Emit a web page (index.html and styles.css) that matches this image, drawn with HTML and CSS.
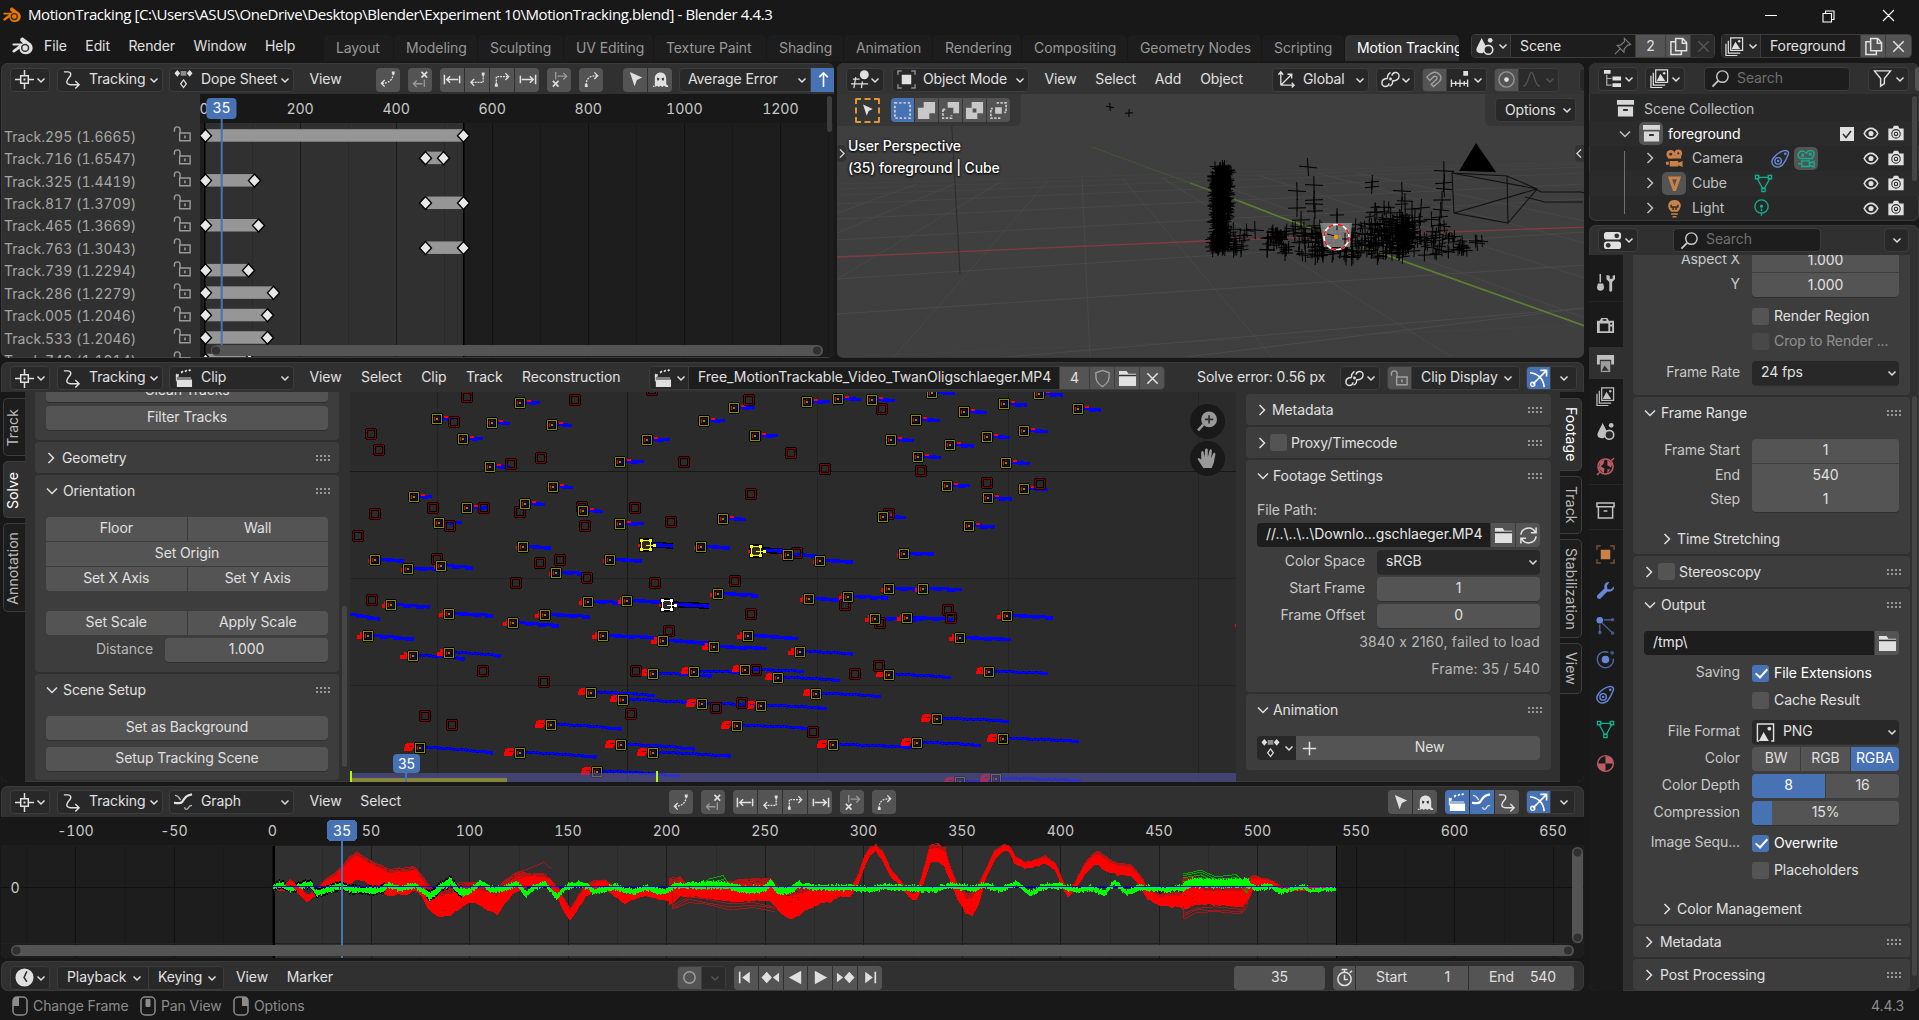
FILE: index.html
```html
<!DOCTYPE html>
<html lang="en">
<head>
<meta charset="utf-8">
<title>MotionTracking - Blender 4.4.3</title>
<link rel="stylesheet" href="styles.css">
</head>
<body>
<svg class="defs" aria-hidden="true">
<symbol id="chev" viewBox="0 0 10 10"><path d="M1.500 3.500 5 7l3.500-3.500" stroke-width="1.500"/></symbol>
<symbol id="right" viewBox="0 0 12 16"><path d="M3.500 3 8.500 8l-5 5" stroke-width="1.500"/></symbol>
<symbol id="down" viewBox="0 0 16 12"><path d="M3 3.500 8 8.500l5-5" stroke-width="1.500"/></symbol>
<symbol id="blender" viewBox="0 0 22 18"><path class="f" d="M9 2.300 11 1l8 6.200c2.500 2.500 2.200 7-.8 9-3.200 2-8 1.400-9.600-2l-.5-2.200-4.600 3.500C2 16.200.5 14.500 2 13.300L7.800 9H2.500C1 9 1 7 2.500 7h9L8.800 4.400z"/><circle class="hole" cx="13.500" cy="11.300" r="4"/><circle class="dot" cx="13.500" cy="11.300" r="2.500"/></symbol>
<symbol id="track" viewBox="0 0 20 20"><path d="M10 0v6M10 14v6M0 10h6M14 10h6M6 6h8v8H6z" stroke-width="1.600"/><path class="f" d="M9 9h2v2H9z"/></symbol>
<symbol id="curvearrow" viewBox="0 0 20 20"><path d="M2 2h4c4 0 4 3.500 1.500 6S3 15 9 15.500h9M14 11.500l4 4-4 4" stroke-width="1.500"/></symbol>
<symbol id="dope" viewBox="0 0 20 20"><path class="f" d="M3.500 0 6.500 3.500 3.500 7 .5 3.500zM16.500 0l3 3.500-3 3.500-3-3.500z"/><path class="f dim" d="M7 1h6v5H7z"/><path d="M10 10.500l3 4-3 4-3-4z" stroke-width="1.300"/></symbol>
<symbol id="clip" viewBox="0 0 20 20"><path class="f" d="M3 11h16v8H3zM2 6l3-1v3L2 9zM7 3l2-1.500 1 1.500-2 2zM11 2l2-1.500 1 1.500-2 1.500zM15 1l2-1 1 1.500-2 1z"/><path d="M2.500 5v8M3 9.500h15" stroke-width="1"/></symbol>
<symbol id="graph" viewBox="0 0 20 20"><path d="M0 10.500c4 0 7 1 8.500-1 3-4.500 4-7 10.500-8" stroke-width="2.400"/><path d="M1 2.500c4 0 4.500 3 6 5M11 15c1 3 3 3 4.500 0 1-2 2-2 3.500-2" opacity=".75" stroke-width="1.500"/></symbol>
<symbol id="a1" viewBox="0 0 20 20"><path stroke-dasharray="2 1.200" d="M3 14c6 0 11-2 12-10"/><path d="M6 10.500 2.500 14 6 17.500"/><path class="f" d="M13.500 1.500h3v3h-3z"/></symbol>
<symbol id="a2" viewBox="0 0 20 20"><path d="M11 2l6 6M17 2l-6 6" stroke-width="1.700"/><path d="M3 14.500h9M6 11l-3.500 3.500L6 18M14 10v8" opacity=".5"/></symbol>
<symbol id="a3" viewBox="0 0 20 20"><path stroke-width="1.600" d="M1.500 5v10M17.500 6v8M4 10h12M7.500 6.500 4 10l3.500 3.500"/></symbol>
<symbol id="a4" viewBox="0 0 20 20"><path stroke-dasharray="2 1" d="M4 13h12V5"/><path d="M6.500 9.500 3 13l3.500 3.500"/><path class="f" d="M14.500 2.500h3v3h-3z"/></symbol>
<symbol id="a5" viewBox="0 0 20 20"><path stroke-dasharray="2 1" d="M3.500 15V7H16"/><path d="M13 3.500 16.500 7 13 10.500"/><path class="f" d="M2 14.500h3v3H2z"/></symbol>
<symbol id="a6" viewBox="0 0 20 20"><path stroke-width="1.600" d="M18.500 5v10M2.500 6v8M4 10h12M12.500 6.500 16 10l-3.500 3.500"/></symbol>
<symbol id="a7" viewBox="0 0 20 20"><path d="M3 11.500l6 6M9 11.500l-6 6" stroke-width="1.700"/><path d="M8 6.500h9M14 3l3.500 3.500L14 10M6 2v8" opacity=".5"/></symbol>
<symbol id="a8" viewBox="0 0 20 20"><path stroke-dasharray="2 1.200" d="M4.500 16C4 9 8 6 16 6"/><path d="M13 2.500 16.500 6 13 9.500"/><path class="f" d="M3 15h3v3H3z"/></symbol>
<symbol id="cursor" viewBox="0 0 20 20"><path class="f" d="M4 2l13 6-5.500 2.500L9 17z"/></symbol>
<symbol id="ghost" viewBox="0 0 20 20"><path class="f" d="M4 18V9C4 .5 16 .5 16 9v9l-2.500-1.500L12 18l-2-1.500L8 18l-1.500-1.500L4 18H2v-2zM16 15l2 1.500V18h-2z"/><path class="hole" d="M6.500 8l2.500 1-1 2H6.500zM13.500 8 11 9l1 2h1.500z"/></symbol>
<symbol id="up" viewBox="0 0 20 20"><path stroke-width="1.700" d="M10 18V3M5.500 7.500 10 3l4.500 4.500"/></symbol>
<symbol id="unlock" viewBox="0 0 20 20"><path d="M7 8.500h11v8H7zM1.500 7V5c0-4 6-4 6 0v3" stroke-width="1.500"/><path class="f" d="M11.700 11h1.800v3h-1.800z"/></symbol>
<symbol id="view3d" viewBox="0 0 20 20"><circle class="f" cx="14" cy="5" r="4.700"/><path d="M0 14.500h18M2 9.500h7M5 7.500 3 19M12 12l-1 7" stroke-width="1.300"/></symbol>
<symbol id="objmode" viewBox="0 0 20 20"><path class="f" d="M5 5h10v10H5z"/><path d="M1 5V1h4M15 1h4v4M19 15v4h-4M5 19H1v-4" opacity=".55" stroke-width="1.500"/></symbol>
<symbol id="axes" viewBox="0 0 20 20"><path d="M4 16V2M1.500 5 4 2l2.500 3M4 16h14M15.500 13.500 18 16l-2.500 2.500M4 16 15 5M11 4.500h4.500V9" stroke-width="1.400"/></symbol>
<symbol id="link" viewBox="0 0 20 20"><path d="M8.500 14c-1 5-8 4-7.500-.5C1 10 4 9 7 9M11.500 6c1-5 8-4 7.500.5C19 10 15 12 12 11M7 9c-1-3 1-5 3-6.500M12 11c1 3-1 5-3 6" stroke-width="1.500"/><circle class="f" cx="10" cy="9.500" r="1.500"/></symbol>
<symbol id="magnet" viewBox="0 0 20 20"><path d="M2 7.500C6 3 9 1 13 3c6 3.500 4 8.500 0 11l-4 3.500-2.500-2.500L12 10c2-2-1-5-3.500-2.500L5 11z" stroke-width="1.500"/></symbol>
<symbol id="snap" viewBox="0 0 20 20"><path d="M1 14h18M1.500 10v8M6 11.500v5M10.500 10v8M15 11.500v5M18.500 10v8" stroke-width="1.400"/><path class="f" d="M14 1h5v5h-5z"/></symbol>
<symbol id="prop" viewBox="0 0 20 20"><circle cx="10" cy="10" r="8" opacity=".45" stroke-width="1.500"/><circle class="f" cx="10" cy="10" r="2.500"/></symbol>
<symbol id="fall" viewBox="0 0 20 20"><path d="M1 17C7 17 7 2.500 10 2.500S13 17 19 17" stroke-width="1.400"/></symbol>
<symbol id="tree" viewBox="0 0 20 20"><path class="f" d="M1 1h7v4H1zM10 8h9v4h-9zM10 15h9v4h-9z"/><path d="M4 6v11h5M4 10h5" stroke-width="1.300" opacity=".7"/></symbol>
<symbol id="imgs" viewBox="0 0 20 20"><path d="M6 1h12.500v13H6zM3.500 4v13H16M1 7v12.500h12" stroke-width="1.300"/><path class="f" d="M7 12.500 11 5l5 7.500z"/><circle class="f" cx="15" cy="4.500" r="1.300"/></symbol>
<symbol id="search" viewBox="0 0 20 20"><circle cx="12" cy="8" r="6" stroke-width="1.500"/><path d="M7.500 12.500 1.500 18.500" stroke-width="2"/></symbol>
<symbol id="filter" viewBox="0 0 20 20"><path d="M1.500 2h17l-6.500 8v5.500L8 18v-8z" stroke-width="1.500"/></symbol>
<symbol id="props" viewBox="0 0 20 20"><rect class="f" x="1" y="1" width="18" height="8" rx="3"/><rect class="f" x="1" y="11" width="18" height="8" rx="3"/><circle class="hole" cx="14.500" cy="5" r="2.500"/><circle class="hole" cx="5.500" cy="15" r="2.500"/></symbol>
<symbol id="coll" viewBox="0 0 20 20"><path class="f" d="M1 1h18v5H1zM2 8h16v10.500H2z"/><path class="hole" d="M7.500 10.500h5v2h-5z"/></symbol>
<symbol id="collo" viewBox="0 0 20 20"><path d="M1 2h18v4H1zM2.500 6v12h15V6M8 10.500h4" stroke-width="1.600"/></symbol>
<symbol id="eye" viewBox="0 0 20 20"><path d="M2 10c4-8 12-8 16 0-4 8-12 8-16 0z" stroke-width="1.900"/><circle class="f" cx="10" cy="10" r="3"/></symbol>
<symbol id="cam" viewBox="0 0 20 20"><path class="f" d="M1 4h5l1.500-3h5L14 4h5v14H1z"/><circle class="ring" cx="10" cy="10.500" r="5"/><circle class="ring" cx="10" cy="10.500" r="2"/></symbol>
<symbol id="camobj" viewBox="0 0 20 20"><circle class="f" cx="6" cy="5.500" r="4.500"/><circle class="f" cx="14" cy="4.500" r="4"/><path class="f" d="M3 7h14v3H3zM5 12.500h9v6H5zM14 14.500l4.500-2v6.500L14 17zM1 13.500h3v3H1z"/><circle class="hole" cx="6" cy="5.500" r="1.500"/><circle class="hole" cx="14" cy="4.500" r="1.200"/></symbol>
<symbol id="camdata" viewBox="0 0 20 20"><path d="M3 10C-1 6 3 1 7 2.500c2 .8 2.500 2 3 2 1.500-4 7.500-3.500 8 0 .3 2.500-1 3.500-2 5.500zM5 12.500h8v6H5zM13 15l5-2v6l-5-2zM1 15.500h3" stroke-width="1.500"/><circle cx="6" cy="6.500" r="1"/><circle cx="14" cy="5.500" r="1"/></symbol>
<symbol id="cone" viewBox="0 0 20 20"><path d="M3 2.500h14L11.500 18h-3zM7.500 5.500h5L10 13z" class="f" fill-rule="evenodd"/></symbol>
<symbol id="mesh" viewBox="0 0 20 20"><path d="M4 3.500h12M3.500 5l5.500 10M16.500 5 11 15M1.500 1.500H5V5H1.500zM15 1.500h3.500V5H15zM8.200 15h3.500v3.500H8.200z" stroke-width="1.400"/></symbol>
<symbol id="bulb" viewBox="0 0 20 20"><path class="f" d="M6.500 13.500C1 8 3 1 10 1s9 7 3.500 12.500zM6.500 15h7v1.700h-7zM8 18h4v1.500H8z"/><path class="holeline" d="M6.500 6v2.500h2v3M13.500 6v2.500h-2v3M8.500 8.500h3"/></symbol>
<symbol id="lightdata" viewBox="0 0 20 20"><circle cx="10" cy="8" r="7" stroke-width="1.400"/><path d="M10 10v9" stroke-dasharray="3 1.500" stroke-width="1.400"/><circle class="f" cx="10" cy="7.500" r="1.600"/></symbol>
<symbol id="constr" viewBox="0 0 20 20"><path d="M2.500 9.500C5 6 10 2.500 15 1.500c3 0 4 2 3 4.500-1.500 4-3.500 8-6 11C5 22-2 16 2.500 9.500z" stroke-width="1.500"/><circle cx="7.500" cy="12.500" r="3.400" stroke-width="1.500"/><circle class="f" cx="7.500" cy="12.500" r="1.300"/><circle cx="15" cy="5" r=".7"/></symbol>
<symbol id="pin" viewBox="0 0 20 20"><path d="M12 1.500 18.500 8l-3 .5-3.500 4-.5 3.500-7-7 3.500-.5 4-3.500zM7.500 12.500 2 18" stroke-width="1.300"/></symbol>
<symbol id="copy" viewBox="0 0 20 20"><path d="M7 1.500h7.500L18.500 6v8.500H7zM14 1.500V6.500h4.500M7 5H2v13.500h11V15" stroke-width="1.600"/></symbol>
<symbol id="x" viewBox="0 0 20 20"><path d="M4.500 4.500l11 11M15.500 4.500l-11 11" stroke-width="1.600"/></symbol>
<symbol id="scene" viewBox="0 0 20 20"><path class="f" d="M7 1l4.500 9-1.500 5c-1 3-8 3-8.500-1C1 11.500 5 6 7 1z"/><circle class="f" cx="16" cy="3.500" r="2.500"/><circle class="holefill" cx="14" cy="13.500" r="4.700" stroke-width="1.700"/></symbol>
<symbol id="shield" viewBox="0 0 20 20"><path d="M10 1.500l7 2.500c.5 7-1 11-7 14.500C4 15 2.500 11 3 4z" stroke-width="1.400"/></symbol>
<symbol id="folder" viewBox="0 0 20 20"><path class="f" d="M1 2h8l2 3h8v13H1z"/><path class="holeline" d="M1 6.800h18"/></symbol>
<symbol id="reload" viewBox="0 0 20 20"><path d="M2 9C3 1 14 0 17 6.500M18 1.500v5.500h-5.500M18 11c-1 8-12 9-15 2.500M2 18.500V13h5.500" stroke-width="1.600"/></symbol>
<symbol id="gizmo" viewBox="0 0 20 20"><path d="M1 4c8 1 14 6 15 15M4 16 18 2M12 1.500h6.500V8" stroke-width="1.700"/><circle cx="4" cy="16" r="2.200"/></symbol>
<symbol id="plus" viewBox="0 0 20 20"><path d="M10 3v14M3 10h14" stroke-width="1.600"/></symbol>
<symbol id="png" viewBox="0 0 20 20"><path d="M4 1h14.500v18H16M4 1H1.500v18H3" stroke-width="1.500"/><path class="f" d="M3 19 8 9.500l5.500 9.500z"/><circle class="f" cx="14" cy="6" r="2"/></symbol>
<symbol id="clock" viewBox="0 0 20 20"><circle class="f" cx="10" cy="10" r="9.500"/><path class="holeline" d="M12.500 3.500 9.500 10l3 4.500"/></symbol>
<symbol id="stop" viewBox="0 0 20 20"><circle cx="10" cy="11.500" r="7" stroke-width="1.600"/><path d="M10 7v5h3.500M7 1.500h6M10 1.500v3M15.500 5 18 3" stroke-width="1.600"/></symbol>
<symbol id="rec" viewBox="0 0 20 20"><circle cx="10" cy="10" r="6" stroke-width="1.500"/></symbol>
<symbol id="p1" viewBox="0 0 20 20"><path class="f" d="M3 4h1.800v12H3zM14.500 4v12L6.500 10z"/></symbol>
<symbol id="p2" viewBox="0 0 20 20"><path class="f" d="M6 4l5.500 6L6 16 .5 10zM19 5v10l-6.500-5z"/></symbol>
<symbol id="p3" viewBox="0 0 20 20"><path class="f" d="M16 3v14L3 10z"/></symbol>
<symbol id="p4" viewBox="0 0 20 20"><path class="f" d="M4 3v14l13-7z"/></symbol>
<symbol id="p5" viewBox="0 0 20 20"><path class="f" d="M14 4l5.500 6-5.500 6-5.500-6zM1 5v10l6.500-5z"/></symbol>
<symbol id="p6" viewBox="0 0 20 20"><path class="f" d="M15.200 4H17v12h-1.800zM5.500 4v12l8-6z"/></symbol>
<symbol id="tool" viewBox="0 0 20 20"><path d="M4.500 1v9" stroke-width="1.600"/><path class="f" d="M2 11h5.500l1 4c0 5-7.500 5-7.500 0zM11 2v4.500l3 3v9c0 1.500 3 1.500 3 0v-9l3-3V2l-2.500 1v3h-3V3z"/></symbol>
<symbol id="render" viewBox="0 0 20 20"><path class="f" fill-rule="evenodd" d="M1 5h3l1.500-3H12l1.500 3H19v13H1zM4 8v8h9V8zM15 7v2h2V7zM15 11v5h2v-5zM7 3.500V5h4V3.500z"/></symbol>
<symbol id="output" viewBox="0 0 20 20"><path class="f" d="M1 1h18v10h-3V6H4v5H1z"/><path class="f" d="M5 7.500h10V19H5z" opacity=".75"/><path class="hole" d="M6 17.500 9 12l4.500 5.500z"/></symbol>
<symbol id="world" viewBox="0 0 20 20"><circle cx="10" cy="10" r="8" stroke-width="1.600"/><path class="f" d="M4 5l5-2-1 4-3 3 4 2-1 5-5-5zM12 3l5 4-1 4-4-2zM12 13l3 0-3 4z"/><path d="M1 19l3-3M16 4l3-3" stroke-width="1.500"/></symbol>
<symbol id="wrench" viewBox="0 0 20 20"><path class="f" d="M14 1c-4-.5-6 3-5 6.500L1.500 15c-1.500 2 1 5 3.200 3.500L12 11c4 1 7.500-1.500 7-5.500L15.500 9 12 8.500 11.500 5z"/></symbol>
<symbol id="part" viewBox="0 0 20 20"><circle class="f" cx="4" cy="4.500" r="3.500"/><path d="M8.500 4h8M4 9v8M6.500 7.500 16.500 17" stroke-width="1.300" opacity=".7"/><circle class="f dim" cx="17.500" cy="4" r="1.900"/><circle class="f dim" cx="4" cy="17.500" r="1.900"/><circle class="f dim" cx="17.500" cy="18" r="1.900"/></symbol>
<symbol id="phys" viewBox="0 0 20 20"><path d="M13 2.500C6 0 1 5 1.500 10.500 2 18 11 21 16 16c2-2 2.500-5 2-7" stroke-width="1.400" opacity=".75"/><circle class="f" cx="10" cy="10" r="4"/><circle class="f dim" cx="17" cy="3" r="2"/></symbol>
<symbol id="mat" viewBox="0 0 20 20"><circle cx="10" cy="10" r="8.300" stroke-width="1.500"/><path class="f" d="M10 2v8h8C18 5 15 2 10 2zM10 18v-8H2c0 5 3 8 8 8z"/></symbol>
<symbol id="mouseL" viewBox="0 0 16 20"><rect x="1" y="1" width="14" height="18" rx="4" stroke-width="1.500"/><path class="f" d="M1 4c0-2 1-3 3-3h3v9H1z"/></symbol>
<symbol id="mouseM" viewBox="0 0 16 20"><rect x="1" y="1" width="14" height="18" rx="4" stroke-width="1.500"/><rect class="f" x="5.500" y="3" width="5" height="8" rx="1"/></symbol>
<symbol id="mouseR" viewBox="0 0 16 20"><rect x="1" y="1" width="14" height="18" rx="4" stroke-width="1.500"/><path class="f" d="M9 1h3c2 0 3 1 3 3v6H9z"/></symbol>
<symbol id="s1" viewBox="0 0 20 20"><path d="M2 2h16v16H2z" stroke-dasharray="2.500 2" stroke-width="2"/></symbol>
<symbol id="s2" viewBox="0 0 20 20"><path class="f" d="M7 1h12v12h-6v6H1V7h6z"/></symbol>
<symbol id="s3" viewBox="0 0 20 20"><path class="f" d="M7 1h12v12h-6V7H7z"/><path d="M2 9v9h9v-3M2 9h4" stroke-dasharray="2.500 1.500" stroke-width="2"/></symbol>
<symbol id="s4" viewBox="0 0 20 20"><path class="f" fill-rule="evenodd" d="M7 1h12v12h-6v6H1V7h6zM8 8v4h4V8z"/></symbol>
<symbol id="s5" viewBox="0 0 20 20"><path class="f" d="M6.500 6.500h7v7h-7z"/><path d="M8 2h10v10h-2M12 18H2V8h2" stroke-dasharray="2.500 1.500" stroke-width="1.800"/></symbol>
<symbol id="hand" viewBox="0 0 20 20"><path class="f" d="M6 19C4 16 2 13 .5 10.500c.8-1.500 2-1 3.500 1L4 4c.5-1.500 2-1.500 2.300 0L7 9l.7-7.500C8 0 10 0 10.300 1.500V9L12 2c.8-1.200 2-.8 2.200.5L13.500 10l2-5c1-1 2.200-.5 2 1L16 14l-2 5z"/></symbol>
<symbol id="zoom" viewBox="0 0 20 20"><circle class="f" cx="11.500" cy="8" r="7.500"/><path d="M6 13 1 18.500" stroke-width="2.500"/><path class="holeline" d="M11.500 4v8M7.500 8h8"/></symbol>
</svg>

<div class="window">
<header class="titlebar">
  <svg class="i app"><use href="#blender"/></svg>
  <span class="title">MotionTracking [C:\Users\ASUS\OneDrive\Desktop\Blender\Experiment 10\MotionTracking.blend] - Blender 4.4.3</span>
  <svg class="winbtns" viewBox="0 0 148 20"><path d="M8 10.500h12M66 8.500h8.500v8.500H66zM68.500 8.500V6h8.500v8.500h-2M126 5l11 11M137 5l-11 11"/></svg>
</header>

<nav class="menubar">
  <svg class="i logo"><use href="#blender"/></svg>
  <div class="mainmenu"><span>File</span><span>Edit</span><span>Render</span><span>Window</span><span>Help</span></div>
  <div class="wtabs"><span class="t70">Layout</span><span class="t84">Modeling</span><span class="t86">Sculpting</span><span class="t90">UV Editing</span><span class="t113">Texture Paint</span><span class="t77">Shading</span><span class="t89">Animation</span><span class="t89">Rendering</span><span class="t105">Compositing</span><span class="t134">Geometry Nodes</span><span class="t83">Scripting</span><span class="on">Motion Tracking</span></div>
  <div class="grp datasel">
    <div class="cell c39"><svg class="i"><use href="#scene"/></svg><svg class="c"><use href="#chev"/></svg></div>
    <div class="cell fld c125"><span>Scene</span><svg class="i pin"><use href="#pin"/></svg></div>
    <div class="cell lit c30">2</div><div class="cell lit c25"><svg class="i"><use href="#copy"/></svg></div><div class="cell off c25"><svg class="i"><use href="#x"/></svg></div>
  </div>
  <div class="grp layersel">
    <div class="cell c39"><svg class="i"><use href="#imgs"/></svg><svg class="c"><use href="#chev"/></svg></div>
    <div class="cell fld c100"><span>Foreground</span></div>
    <div class="cell lit c25"><svg class="i"><use href="#copy"/></svg></div><div class="cell lit c25"><svg class="i"><use href="#x"/></svg></div>
  </div>
</nav>

<main class="work">
<div class="leftcol">
 <div class="toprow">
  <section class="area dopearea">
   <div class="hdr">
    <div class="dd ed"><svg class="i"><use href="#track"/></svg><svg class="c"><use href="#chev"/></svg></div>
    <div class="dd mode"><svg class="i"><use href="#curvearrow"/></svg><span>Tracking</span><svg class="c"><use href="#chev"/></svg></div>
    <div class="dd kind"><svg class="i"><use href="#dope"/></svg><span>Dope Sheet</span><svg class="c"><use href="#chev"/></svg></div>
    <div class="menus dopemenus"><span>View</span></div>
    <div class="tools"><div class="b"><svg class="i"><use href="#a1"/></svg></div><div class="b"><svg class="i"><use href="#a2"/></svg></div><div class="bg"><div class="b"><svg class="i"><use href="#a3"/></svg></div><div class="b"><svg class="i"><use href="#a4"/></svg></div><div class="b"><svg class="i"><use href="#a5"/></svg></div><div class="b"><svg class="i"><use href="#a6"/></svg></div></div><div class="b"><svg class="i"><use href="#a7"/></svg></div><div class="b"><svg class="i"><use href="#a8"/></svg></div></div>
    <div class="bg selghost"><div class="b"><svg class="i"><use href="#cursor"/></svg></div><div class="b"><svg class="i"><use href="#ghost"/></svg></div></div>
    <div class="dd avg"><span>Average Error</span><svg class="c"><use href="#chev"/></svg></div>
    <div class="b blue upbtn"><svg class="i"><use href="#up"/></svg></div>
   </div>
   <div class="dope">
    <ul class="names">
     <li>Track.295 (1.6665)<svg class="i"><use href="#unlock"/></svg></li><li>Track.716 (1.6547)<svg class="i"><use href="#unlock"/></svg></li><li>Track.325 (1.4419)<svg class="i"><use href="#unlock"/></svg></li><li>Track.817 (1.3709)<svg class="i"><use href="#unlock"/></svg></li><li>Track.465 (1.3669)<svg class="i"><use href="#unlock"/></svg></li><li>Track.763 (1.3043)<svg class="i"><use href="#unlock"/></svg></li><li>Track.739 (1.2294)<svg class="i"><use href="#unlock"/></svg></li><li>Track.286 (1.2279)<svg class="i"><use href="#unlock"/></svg></li><li>Track.005 (1.2046)<svg class="i"><use href="#unlock"/></svg></li><li>Track.533 (1.2046)<svg class="i"><use href="#unlock"/></svg></li><li>Track.749 (1.1914)<svg class="i"><use href="#unlock"/></svg></li>
    </ul>
    <svg class="dopechart" id="dopechart" viewBox="0 0 634 263" width="634" height="263"></svg>
   </div>
  </section>

  <section class="area viewarea">
   <svg class="scene3d" id="scene3d" viewBox="0 0 748 294" width="748" height="294"></svg>
   <div class="vover">
    <div class="hdr vh">
     <div class="dd ved"><svg class="i"><use href="#view3d"/></svg><svg class="c"><use href="#chev"/></svg></div>
     <div class="dd objm"><svg class="i"><use href="#objmode"/></svg><span>Object Mode</span><svg class="c"><use href="#chev"/></svg></div>
     <div class="menus viewmenus"><span>View</span><span>Select</span><span>Add</span><span>Object</span></div>
     <div class="dd glob"><svg class="i"><use href="#axes"/></svg><span>Global</span><svg class="c"><use href="#chev"/></svg></div>
     <div class="dd lnk"><svg class="i"><use href="#link"/></svg><svg class="c"><use href="#chev"/></svg></div>
     <div class="grp g7"><div class="cell lit c24 dimi"><svg class="i"><use href="#magnet"/></svg></div><div class="cell c39"><svg class="i"><use href="#snap"/></svg><svg class="c"><use href="#chev"/></svg></div></div>
     <div class="grp g7"><div class="cell lit c24"><svg class="i"><use href="#prop"/></svg></div><div class="cell c39 off"><svg class="i"><use href="#fall"/></svg><svg class="c"><use href="#chev"/></svg></div></div>
     <div class="dd cut"><svg class="i"><use href="#cursor"/></svg></div>
    </div>
    <div class="vtool">
     <div class="toolbox"><div class="seltool"><svg class="i"><use href="#cursor"/></svg></div><div class="bg"><div class="b blue"><svg class="i"><use href="#s1"/></svg></div><div class="b"><svg class="i"><use href="#s2"/></svg></div><div class="b"><svg class="i"><use href="#s3"/></svg></div><div class="b"><svg class="i"><use href="#s4"/></svg></div><div class="b"><svg class="i"><use href="#s5"/></svg></div></div></div>
     <div class="optbox"><div class="dd opts"><span>Options</span><svg class="c"><use href="#chev"/></svg></div></div>
    </div>
    <div class="vinfo"><b>User Perspective</b><b>(35) foreground | Cube</b></div>
    <div class="handle hl"><svg class="i"><use href="#right"/></svg></div><div class="handle hr"><svg class="i"><use href="#right"/></svg></div>
   </div>
  </section>
 </div>

 <section class="area cliparea">
  <div class="hdr">
   <div class="dd ed"><svg class="i"><use href="#track"/></svg><svg class="c"><use href="#chev"/></svg></div>
   <div class="dd mode"><svg class="i"><use href="#curvearrow"/></svg><span>Tracking</span><svg class="c"><use href="#chev"/></svg></div>
   <div class="dd kind"><svg class="i"><use href="#clip"/></svg><span>Clip</span><svg class="c"><use href="#chev"/></svg></div>
   <div class="menus clipmenus"><span>View</span><span>Select</span><span>Clip</span><span>Track</span><span>Reconstruction</span></div>
   <div class="grp"><div class="cell c39"><svg class="i"><use href="#clip"/></svg><svg class="c"><use href="#chev"/></svg></div><div class="cell fld c371"><span>Free_MotionTrackable_Video_TwanOligschlaeger.MP4</span></div><div class="cell lit c30">4</div><div class="cell lit c25 dimi"><svg class="i"><use href="#shield"/></svg></div><div class="cell lit c25"><svg class="i"><use href="#folder"/></svg></div><div class="cell lit c24"><svg class="i"><use href="#x"/></svg></div></div>
   <span class="solve">Solve error: 0.56 px</span>
   <div class="dd lnk"><svg class="i"><use href="#link"/></svg><svg class="c"><use href="#chev"/></svg></div>
   <div class="grp g7"><div class="cell lit c24 dimi"><svg class="i"><use href="#unlock"/></svg></div><div class="cell c109 ddc"><span>Clip Display</span><svg class="c"><use href="#chev"/></svg></div></div>
   <div class="grp g7"><div class="cell blue c24"><svg class="i"><use href="#gizmo"/></svg></div><div class="cell c25"><svg class="c"><use href="#chev"/></svg></div></div>
  </div>
  <div class="clipbody">
   <div class="ltabs"><div class="v h58"><span>Track</span></div><div class="v h57 on"><span>Solve</span></div><div class="v h89"><span>Annotation</span></div></div>
   <div class="lpanels">
    <div class="panel first"><div class="btn half">Clean Tracks</div><div class="btn">Filter Tracks</div></div>
    <div class="panel"><h3><svg class="r"><use href="#right"/></svg>Geometry<i class="grip"></i></h3></div>
    <div class="panel orient"><h3><svg class="d"><use href="#down"/></svg>Orientation<i class="grip"></i></h3>
     <div class="stack"><div class="two"><div>Floor</div><div>Wall</div></div><div class="one">Set Origin</div><div class="two"><div>Set X Axis</div><div>Set Y Axis</div></div></div>
     <div class="stack sc"><div class="two"><div>Set Scale</div><div>Apply Scale</div></div></div>
     <div class="dist"><span>Distance</span><div class="btn">1.000</div></div></div>
    <div class="panel setup"><h3><svg class="d"><use href="#down"/></svg>Scene Setup<i class="grip"></i></h3><div class="btn">Set as Background</div><div class="btn">Setup Tracking Scene</div></div>
   </div>
   <div class="lscroll"><i></i></div>
   <div class="canvas"><svg id="clipcanvas" viewBox="0 0 886 390" width="886" height="390" shape-rendering="crispEdges"></svg>
    <div class="nav"><svg class="i"><use href="#zoom"/></svg></div><div class="nav n2"><svg class="i"><use href="#hand"/></svg></div>
    <span class="fbox">35</span></div>
   <div class="rpanels">
    <div class="panel"><h3><svg class="r"><use href="#right"/></svg>Metadata<i class="grip"></i></h3></div>
    <div class="panel"><h3><svg class="r"><use href="#right"/></svg><i class="chk"></i>Proxy/Timecode<i class="grip"></i></h3></div>
    <div class="panel foot"><h3><svg class="d"><use href="#down"/></svg>Footage Settings<i class="grip"></i></h3>
     <p class="fp">File Path:</p>
     <div class="path"><div class="text">//..\..\..\Downlo...gschlaeger.MP4</div><div class="pb"><svg class="i"><use href="#folder"/></svg></div><div class="pb"><svg class="i"><use href="#reload"/></svg></div></div>
     <div class="row"><label>Color Space</label><div class="sel"><span>sRGB</span><svg class="c"><use href="#chev"/></svg></div></div>
     <div class="row"><label>Start Frame</label><div class="btn">1</div></div>
     <div class="row"><label>Frame Offset</label><div class="btn">0</div></div>
     <p class="rt">3840 x 2160, failed to load</p><p class="rt">Frame: 35 / 540</p></div>
    <div class="panel anim"><h3><svg class="d"><use href="#down"/></svg>Animation<i class="grip"></i></h3><div class="new"><div class="nd"><svg class="i"><use href="#dope"/></svg><svg class="c"><use href="#chev"/></svg></div><div class="nb"><svg class="i"><use href="#plus"/></svg><span>New</span></div></div></div>
   </div>
   <div class="rtabs"><div class="v h73 on"><span>Footage</span></div><div class="v h58"><span>Track</span></div><div class="v h99"><span>Stabilization</span></div><div class="v h51"><span>View</span></div></div>
  </div>
 </section>

 <section class="area grapharea">
  <div class="hdr">
   <div class="dd ed"><svg class="i"><use href="#track"/></svg><svg class="c"><use href="#chev"/></svg></div>
   <div class="dd mode"><svg class="i"><use href="#curvearrow"/></svg><span>Tracking</span><svg class="c"><use href="#chev"/></svg></div>
   <div class="dd kind"><svg class="i"><use href="#graph"/></svg><span>Graph</span><svg class="c"><use href="#chev"/></svg></div>
   <div class="menus graphmenus"><span>View</span><span>Select</span></div>
   <div class="tools"><div class="b"><svg class="i"><use href="#a1"/></svg></div><div class="b"><svg class="i"><use href="#a2"/></svg></div><div class="bg"><div class="b"><svg class="i"><use href="#a3"/></svg></div><div class="b"><svg class="i"><use href="#a4"/></svg></div><div class="b"><svg class="i"><use href="#a5"/></svg></div><div class="b"><svg class="i"><use href="#a6"/></svg></div></div><div class="b"><svg class="i"><use href="#a7"/></svg></div><div class="b"><svg class="i"><use href="#a8"/></svg></div></div>
   <div class="endgrp"><div class="bg"><div class="b"><svg class="i"><use href="#cursor"/></svg></div><div class="b"><svg class="i"><use href="#ghost"/></svg></div></div><div class="bg"><div class="b blue"><svg class="i"><use href="#clip"/></svg></div><div class="b blue"><svg class="i"><use href="#graph"/></svg></div><div class="b"><svg class="i"><use href="#curvearrow"/></svg></div></div><div class="grp"><div class="cell blue c24"><svg class="i"><use href="#gizmo"/></svg></div><div class="cell c25"><svg class="c"><use href="#chev"/></svg></div></div></div>
  </div>
  <svg id="graphchart" viewBox="0 0 1583 141" width="1583" height="141" shape-rendering="crispEdges"></svg>
 </section>

 <section class="area timearea">
  <div class="hdr">
   <div class="dd ed"><svg class="i"><use href="#clock"/></svg><svg class="c"><use href="#chev"/></svg></div>
   <div class="grp g7"><div class="cell ddc c92"><span>Playback</span><svg class="c"><use href="#chev"/></svg></div><div class="cell ddc c76"><span>Keying</span><svg class="c"><use href="#chev"/></svg></div></div>
   <div class="menus timemenus"><span>View</span><span>Marker</span></div>
   <div class="grp"><div class="cell lit c24 dimi"><svg class="i"><use href="#rec"/></svg></div><div class="cell c25 off"><svg class="c"><use href="#chev"/></svg></div></div>
   <div class="bg trans"><div class="b"><svg class="i"><use href="#p1"/></svg></div><div class="b"><svg class="i"><use href="#p2"/></svg></div><div class="b"><svg class="i"><use href="#p3"/></svg></div><div class="b"><svg class="i"><use href="#p4"/></svg></div><div class="b"><svg class="i"><use href="#p5"/></svg></div><div class="b"><svg class="i"><use href="#p6"/></svg></div></div>
   <div class="num cur">35</div>
   <div class="bg range"><div class="b"><svg class="i"><use href="#stop"/></svg></div><div class="num st"><span>Start</span><span>1</span></div><div class="num en"><span>End</span><span>540</span></div></div>
  </div>
 </section>
</div>

<div class="rightcol">
 <section class="area outliner">
  <div class="hdr">
   <div class="dd ed"><svg class="i"><use href="#tree"/></svg><svg class="c"><use href="#chev"/></svg></div>
   <div class="dd ed2"><svg class="i"><use href="#imgs"/></svg><svg class="c"><use href="#chev"/></svg></div>
   <div class="srch s1"><svg class="i"><use href="#search"/></svg><span>Search</span></div>
   <div class="dd flt"><svg class="i"><use href="#filter"/></svg><svg class="c"><use href="#chev"/></svg></div>
   <i class="sliver"></i>
  </div>
  <div class="rows">
   <div class="orow r0"><svg class="i"><use href="#coll"/></svg><span>Scene Collection</span></div>
   <div class="orow alt r1"><svg class="d"><use href="#down"/></svg><em><svg class="i"><use href="#coll"/></svg></em><span class="act">foreground</span><div class="vis"><svg class="ck" viewBox="0 0 14 14"><path class="f" d="M0 0h14v14H0z"/><path class="holeline" d="M3 7l3 3.500L11 4"/></svg><svg class="i"><use href="#eye"/></svg><svg class="i"><use href="#cam"/></svg></div></div>
   <div class="orow r2"><svg class="r"><use href="#right"/></svg><em class="no or"><svg class="i"><use href="#camobj"/></svg></em><span class="w88">Camera</span><svg class="i bl"><use href="#constr"/></svg><em class="gr"><svg class="i"><use href="#camdata"/></svg></em><div class="vis"><svg class="i"><use href="#eye"/></svg><svg class="i"><use href="#cam"/></svg></div></div>
   <div class="orow alt r2"><svg class="r"><use href="#right"/></svg><em class="or"><svg class="i"><use href="#cone"/></svg></em><span class="w71">Cube</span><svg class="i gr"><use href="#mesh"/></svg><div class="vis"><svg class="i"><use href="#eye"/></svg><svg class="i"><use href="#cam"/></svg></div></div>
   <div class="orow r2"><svg class="r"><use href="#right"/></svg><em class="no or"><svg class="i"><use href="#bulb"/></svg></em><span class="w69">Light</span><svg class="i gr"><use href="#lightdata"/></svg><div class="vis"><svg class="i"><use href="#eye"/></svg><svg class="i"><use href="#cam"/></svg></div></div>
   <i class="oscroll"></i><i class="guide"></i>
  </div>
 </section>
 <section class="area props">
  <div class="hdr">
   <div class="dd ed"><svg class="i"><use href="#props"/></svg><svg class="c"><use href="#chev"/></svg></div>
   <div class="srch s2"><svg class="i"><use href="#search"/></svg><span>Search</span></div>
   <div class="dd pc"><svg class="c"><use href="#chev"/></svg></div>
  </div>
  <div class="pbody">
   <div class="ptabs">
    <div class="pt a"><svg class="i"><use href="#tool"/></svg></div><div class="pt b2"><svg class="i"><use href="#render"/></svg></div><div class="pt on"><svg class="i"><use href="#output"/></svg></div><div class="pt"><svg class="i"><use href="#imgs"/></svg></div><div class="pt"><svg class="i"><use href="#scene"/></svg></div><div class="pt red"><svg class="i"><use href="#world"/></svg></div><div class="pt sep"><svg class="i"><use href="#collo"/></svg></div><div class="pt sep or"><svg class="i"><use href="#objmode"/></svg></div><div class="pt bl"><svg class="i"><use href="#wrench"/></svg></div><div class="pt bl"><svg class="i"><use href="#part"/></svg></div><div class="pt bl"><svg class="i"><use href="#phys"/></svg></div><div class="pt bl"><svg class="i"><use href="#constr"/></svg></div><div class="pt gr"><svg class="i"><use href="#mesh"/></svg></div><div class="pt red low"><svg class="i"><use href="#mat"/></svg></div>
   </div>
   <div class="pcol">
    <div class="panel p0">
     <div class="prow"><label>Aspect X</label><div class="btn jb">1.000</div></div>
     <div class="prow"><label>Y</label><div class="btn jt">1.000</div></div>
     <div class="prow ck1"><label></label><i class="chk"></i><span>Render Region</span></div>
     <div class="prow ck2 muted"><label></label><i class="chk"></i><span>Crop to Render ...</span></div>
     <div class="prow fr"><label>Frame Rate</label><div class="sel"><span>24 fps</span><svg class="c"><use href="#chev"/></svg></div></div></div>
    <div class="panel p1"><h3><svg class="d"><use href="#down"/></svg>Frame Range<i class="grip"></i></h3>
     <div class="prow s"><label>Frame Start</label><div class="btn jb">1</div></div><div class="prow s"><label>End</label><div class="btn jb jt">540</div></div><div class="prow s"><label>Step</label><div class="btn jt">1</div></div>
     <div class="sub"><svg class="r"><use href="#right"/></svg>Time Stretching</div></div>
    <div class="panel"><h3><svg class="r"><use href="#right"/></svg><i class="chk"></i>Stereoscopy<i class="grip"></i></h3></div>
    <div class="panel p2"><h3><svg class="d"><use href="#down"/></svg>Output<i class="grip"></i></h3>
     <div class="path"><div class="text">/tmp\</div><div class="pb"><svg class="i"><use href="#folder"/></svg></div></div>
     <div class="prow n"><label>Saving</label><i class="chk yes"></i><span class="hi">File Extensions</span></div>
     <div class="prow n"><label></label><i class="chk"></i><span>Cache Result</span></div>
     <div class="prow n ff"><label>File Format</label><div class="sel"><svg class="i"><use href="#png"/></svg><span>PNG</span><svg class="c"><use href="#chev"/></svg></div></div>
     <div class="prow n"><label>Color</label><div class="seg"><div>BW</div><div>RGB</div><div class="blue">RGBA</div></div></div>
     <div class="prow n"><label>Color Depth</label><div class="seg"><div class="blue">8</div><div>16</div></div></div>
     <div class="prow n"><label>Compression</label><div class="btn comp">15%</div></div>
     <div class="prow n iq"><label>Image Sequ...</label><i class="chk yes"></i><span class="hi">Overwrite</span></div>
     <div class="prow n"><label></label><i class="chk"></i><span>Placeholders</span></div>
     <div class="sub cm"><svg class="r"><use href="#right"/></svg>Color Management</div></div>
    <div class="panel"><h3><svg class="r"><use href="#right"/></svg>Metadata<i class="grip"></i></h3></div>
    <div class="panel"><h3><svg class="r"><use href="#right"/></svg>Post Processing<i class="grip"></i></h3></div>
   </div>
   <i class="pscroll"></i>
  </div>
 </section>
</div>
</main>

<footer class="status"><svg class="m"><use href="#mouseL"/></svg><span class="f1">Change Frame</span><svg class="m"><use href="#mouseM"/></svg><span class="f2">Pan View</span><svg class="m"><use href="#mouseR"/></svg><span>Options</span><span class="ver">4.4.3</span></footer>
</div>
<script src="charts.js"></script>
</body>
</html>
```
FILE: styles.css
```css
*{box-sizing:border-box}
body{margin:0;background:#181818;color:#e0e0e0;font:14px/1 Inter,"Liberation Sans",sans-serif;letter-spacing:-.1px;overflow:hidden}
h3,p,ul{margin:0;padding:0;font-weight:400;list-style:none}
svg{display:block;flex:none;fill:none;stroke:currentColor;stroke-width:1.400}
.defs{position:absolute;width:0;height:0}
.f{fill:currentColor;stroke:none}
.dim{opacity:.55}
.hole{fill:#303030;stroke:none}
.ring{stroke:#303030;stroke-width:1.300}
.holefill{fill:#282828}
.holeline{stroke:#303030;stroke-width:1.600;fill:none}
.dot{fill:currentColor;stroke:none}
.i{width:19px;height:19px}
.c{width:10px;height:10px}
.r{width:12px;height:16px}
.d{width:16px;height:12px}
.window{width:1919px;height:1020px;display:flex;flex-direction:column}
.titlebar{height:31px;flex:none;display:flex;align-items:center;padding:0 0 2px 2px}
.app{width:20px;height:17px;color:#ea7600;margin-right:6px}
.app .dot{fill:#265787}
.title{font:15px/1 "Open Sans",sans-serif;color:#fff;white-space:nowrap;letter-spacing:-.42px}
.winbtns{width:148px;height:20px;margin-left:auto;margin-right:14px;stroke:#fff;stroke-width:1.100}
.menubar{height:32px;flex:none;display:flex;align-items:flex-start;padding:3px 0 0 11px}
.logo{width:23px;height:19px;margin-top:2px}
.mainmenu{width:290px;display:flex;gap:18.500px;padding:5px 0 0 10px}
.wtabs{width:1137px;flex:none;display:flex;margin-top:1px;overflow:hidden;color:#989898}
.wtabs span{height:26px;line-height:26px;padding-left:12px;background:#1d1d1d;border-radius:5px 5px 0 0;border-right:1px solid #181818;flex:none;white-space:nowrap}
.wtabs .on{width:115px;background:#303030;color:#fff;overflow:hidden}
.t70{width:70px}.t84{width:84px}.t86{width:86px}.t90{width:90px}.t113{width:113px}.t77{width:77px}.t89{width:89px}.t105{width:106px}.t134{width:134px}.t83{width:83px}
.grp,.bg{display:flex;flex:none;height:24px;border-radius:4px;overflow:hidden}
.grp{border:1px solid #3d3d3d}
.cell{display:flex;align-items:center;justify-content:center;gap:4px;background:#282828;border-right:1px solid #3d3d3d;flex:none;white-space:nowrap}
.cell:last-child{border-right:0}
.lit{background:#545454}
.fld{background:#1d1d1d;justify-content:flex-start;padding-left:9px}
.ddc{justify-content:space-between;padding:0 6px 0 9px}
.off{color:#545454;background:#2b2b2b}
.dimi{color:#a0a0a0}
.c24{width:24px}.c25{width:25px}.c30{width:30px}.c39{width:39px}.c76{width:74px}.c92{width:91px}.c100{width:100px}.c109{width:107px}.c125{width:125px}.c371{width:371px;letter-spacing:-.05px}
.datasel{margin-left:10px;width:244px}
.pin{margin-left:auto;margin-right:3px;color:#777}
.layersel{margin-left:6px}
.work{flex:1;display:flex;padding:0 0 0 1px;min-height:0}
.leftcol{width:1583px;flex:none;display:flex;flex-direction:column}
.rightcol{width:330px;margin-left:5px;flex:none;display:flex;flex-direction:column}
.area{background:#303030;border-radius:7px;overflow:hidden;flex:none;box-shadow:inset 0 0 0 1px #3a3a3a}
.toprow{display:flex;height:295px;margin-bottom:4px;gap:3px}
.dopearea{width:833px}
.viewarea{width:747px;background:#3d3d3d;position:relative}
.cliparea{height:420px;margin-bottom:4px}
.grapharea{height:172px;margin-bottom:3px}
.timearea{height:30px}
.hdr{height:31px;display:flex;align-items:center;padding:1px 0 0 9px}
.hdr span{position:relative;top:-1px}
.toprow .hdr{padding-top:2px}
.cliparea .hdr{height:30px;padding-top:2px}
.timearea .hdr{padding-top:2px}
.dd{height:24px;display:flex;align-items:center;background:#282828;border:1px solid #3d3d3d;border-radius:4px;flex:none;padding-left:4px;white-space:nowrap}
.dd .c{margin-left:auto;margin-right:3px}
.ed{width:40px;margin-right:7px}
.mode{width:106px;margin-right:6px}
.mode span{margin-left:8px}
.kind{width:125px}
.kind span{margin-left:8px}
.menus{display:flex;gap:18.800px;padding-left:15.500px;flex:none;white-space:nowrap}
.dopemenus{width:82px}
.viewmenus{width:243px}
.clipmenus{width:355px;gap:19.500px}
.graphmenus{width:375px}
.timemenus{width:453px;padding-left:12px}
.tools{display:flex;gap:8px}
.b{width:24px;height:24px;background:#545454;display:flex;align-items:center;justify-content:center;border-radius:4px;flex:none}
.bg{gap:1px}
.bg .b{border-radius:0}
.tools .bg{width:99px}
.tools .bg .b{width:24px}
.blue{background:#4772b3;color:#fff}
.blue .hole{fill:#4772b3}
.b .hole{fill:#545454}
.selghost{margin-left:20px}
.avg{width:132px;margin-left:7px;padding-left:8px;border-radius:4px 0 0 4px}
.upbtn{border-radius:0}
.dope{display:flex;height:263px}
.names{width:199px;flex:none;padding:31.500px 0 0 3px;color:#a6a6a6;letter-spacing:.02px}
.names li{height:22.450px;display:flex;justify-content:space-between;align-items:center;padding-right:8px;white-space:nowrap;font-feature-settings:"tnum"}
.names .i{position:relative;top:-2px;color:#999}
.dopechart,#graphchart,#clipcanvas,.scene3d{stroke:none}
.rl{font:14.200px Inter,sans-serif;fill:#c8c8c8;text-anchor:middle;font-feature-settings:"tnum";stroke:none}
.scene3d{position:absolute;left:0;top:0}
.vover{position:relative}
.vh{background:#333}
.vh .ved{width:38px;margin-right:8px}
.objm{width:137px}
.objm span,.glob span{margin-left:7px}
.glob{width:97px}
.lnk{width:39px;margin-left:7px}
.g7{margin-left:7px}
.cut{margin-left:20px;width:24px}
.timearea .g7{margin-left:0}
.vtool{display:flex;justify-content:space-between}
.toolbox,.optbox{height:32px;background:#363636;display:flex;align-items:center}
.toolbox{width:184px;border-radius:0 0 6px 0;padding-left:18px;gap:11px}
.toolbox .b{width:23px;color:#c8c8c8}
.seltool{width:25px;height:25px;border:2px dashed #e2982f;border-radius:2px;display:flex;align-items:center;justify-content:center}
.seltool .i{width:15px;height:15px}
.optbox{width:99px;border-radius:0 0 0 6px;padding-left:10px}
.opts{width:81px;padding-left:9px}
.vinfo{display:flex;flex-direction:column;gap:8px;padding:13px 0 0 11px;color:#fff;text-shadow:0 0 3px #000,0 1px 2px #000}
.vinfo b{font-weight:500}
.handle{position:absolute;top:82px;width:9px;height:17px;background:#333;display:flex;align-items:center}
.handle .i{width:10px;height:15px}
.hl{left:0;border-radius:0 4px 4px 0}
.hr{right:0;border-radius:0 4px 4px 0;transform:scaleX(-1)}
.solve{width:175px;padding-left:32px;white-space:nowrap}
.cliparea .lnk{margin-left:0;width:40px}
.cliparea .g7+.g7{margin-left:6px}
.clipbody{display:flex;height:390px}
.ltabs,.rtabs{width:24px;background:#181818;flex:none;padding-top:6px;display:flex;flex-direction:column;gap:5px}
.v{background:#1d1d1d;border:1px solid #3d3d3d;color:#b8b8b8;display:flex;align-items:center;justify-content:center;flex:none;width:22px}
.v span{writing-mode:vertical-rl;white-space:nowrap;letter-spacing:.1px}
.ltabs .v{margin-left:2px;border-right:0;border-radius:5px 0 0 5px;padding:2px 3px 0 0}
.ltabs span{transform:rotate(180deg)}
.rtabs .v{border-left:0;border-radius:0 5px 5px 0}
.v.on{background:#303030;color:#fff}
.h58{height:58px}.h57{height:57px}.h89{height:89px}.h73{height:73px}.h99{height:99px}.h51{height:51px}
.lpanels{width:314px;padding-left:10px;overflow:hidden;flex:none;display:flex;flex-direction:column;gap:2px}
.panel{background:#3d3d3d;border-radius:4px;flex:none;padding:0 11px}
.panel h3{height:31px;display:flex;align-items:center;gap:3px;margin:0 -2px;font-size:14px}
.rpanels h3{gap:2px}
.panel h3 .r{margin:0 2px 0 1px}
.grip{width:15px;height:7px;margin-left:auto;background:radial-gradient(circle,#999 1px,transparent 1.300px) 0 0/4px 4px}
.btn{height:24px;border-radius:4px;background:#545454;display:flex;align-items:center;justify-content:center;box-shadow:0 1px 0 #303030;padding-bottom:2px}
.panel.first{height:48px;border-radius:0 0 4px 4px}
.half{height:24px;margin-top:-14px;border-radius:4px;margin-bottom:4px;padding-bottom:1px}
.orient{height:197px}
.stack{margin-top:11px;border-radius:4px;overflow:hidden;display:grid;gap:1px;background:#3d3d3d}
.two{display:grid;grid-template-columns:1fr 1fr;gap:1px}
.two div,.one{height:24px;background:#545454;display:flex;align-items:center;justify-content:center;padding-bottom:2px}
.sc{margin-top:20px}
.dist{display:flex;margin-top:3px}
.dist span{width:119px;text-align:right;padding:4px 12px 0 0;color:#b8b8b8}
.dist .btn{flex:1}
.setup{height:106px}
.setup .btn{margin-top:7px}
.setup h3+.btn{margin-top:11px}
.lscroll{width:11px;padding:214px 0 0 3px;flex:none}
.lscroll i{display:block;width:5px;height:161px;border-radius:3px;background:#454545}
.canvas{width:886px;flex:none;position:relative;background:#2b2b2b;overflow:hidden}
.nav{position:absolute;left:840px;top:12px;width:35px;height:35px;border-radius:50%;background:#191919;display:flex;align-items:center;justify-content:center;color:#999}
.nav .i{width:21px;height:21px}
.n2{top:49px}
.fbox{position:absolute;left:43px;top:362px;width:27px;height:19px;border-radius:4px;background:#4772b3;color:#fff;text-align:center;line-height:19px}
.rpanels{width:324px;flex:none;padding:2px 9px 0 10px;display:flex;flex-direction:column;gap:2px}
.chk{width:17px;height:17px;border-radius:3px;background:#545454;flex:none;display:block}
.yes{background:#4772b3}
.yes::after{content:"";display:block;width:5px;height:10px;margin:1px 0 0 6px;border:solid #fff;border-width:0 2px 2px 0;transform:rotate(42deg)}
h3 .chk{margin:0 2px 0 -2px}
.pcol h3 .chk{margin:0 1px 0 -2px}
.foot{height:232px}
.fp{padding-top:12px;height:32px;color:#c8c8c8}
.path{display:flex;gap:1px;height:24px}
.text{flex:1;background:#1d1d1d;border-radius:4px 0 0 4px;padding:0 0 0 9px;line-height:22px;color:#e6e6e6;white-space:nowrap;letter-spacing:-.05px}
.pb{width:24px;background:#545454;display:flex;align-items:center;justify-content:center}
.pb:last-child{border-radius:0 4px 4px 0}
.row{display:grid;grid-template-columns:108px 163px;column-gap:12px;height:24px;margin-top:3px;align-items:center}
label{text-align:right;color:#c8c8c8;white-space:nowrap;padding-bottom:2px}
.sel{height:24px;border-radius:4px;background:#282828;display:flex;align-items:center;padding:0 2px 0 9px;box-shadow:0 1px 0 #303030}
.sel span{padding-bottom:2px}
.sel .c{margin-left:auto}
.rt{text-align:right;color:#b8b8b8;padding-top:4px;height:24px;margin-top:3px;letter-spacing:.2px}
.anim{height:76px}
.new{display:flex;margin-top:11px;height:24px;border-radius:4px;overflow:hidden}
.nd{width:39px;background:#282828;display:flex;align-items:center;padding-left:4px;gap:4px}
.nb{flex:1;background:#545454;display:flex;align-items:center;padding-left:4px}
.nb span{flex:1;text-align:center;padding-bottom:2px}
.endgrp{display:flex;margin-left:auto;gap:7.500px;margin-right:9px}
.endgrp .grp{width:49px}
.timemenus+.grp{width:49px}
.trans{width:148px;margin-left:8px}
.trans .b{width:23.800px}
.num{height:24px;background:#545454;display:flex;align-items:center}
.cur{width:91px;margin-left:352px;border-radius:4px;justify-content:center;padding-bottom:2px}
.range{margin-left:8px}
.range .b{width:22px}
.st,.en{justify-content:space-between;padding:0 18px 0 20px}
.st{width:112px}.en{width:105px}
.outliner{height:158px;background:#282828;margin-bottom:4px}
.outliner .hdr{background:#303030;padding-top:0}
.sliver{width:4px;height:24px;margin-left:6px;background:#545454;border-radius:4px 0 0 4px}
.ed2{width:40px}
.srch{height:24px;border:1px solid #3d3d3d;border-radius:4px;background:#1d1d1d;color:#707070;display:flex;align-items:center;gap:7px;padding-left:6px;width:148px}
.srch .i{color:#c8c8c8}
.s1{margin-left:19px}
.flt{width:41px;margin-left:18px}
.rows{position:relative;padding-top:2.500px}
.orow{height:24.800px;display:flex;align-items:center;color:#c0c0c0}
.alt{background:#2b2b2b}
.act{color:#fff}
.r0{padding-left:27px;gap:9px}
.r0 .i,.orow em .i{color:#d8d8d8}
.r1{padding-left:28px}
.orow em{width:24px;height:23px;border-radius:5px;background:#545454;display:flex;align-items:center;justify-content:center;margin:0 6px;flex:none}
.orow .no{background:none}
.r2{padding-left:55px}
.r1 .act{margin-left:-1px}
.or,.orow .or .i{color:#ca8148}
.bl{color:#6687d8}
.gr,.orow .gr .i{color:#10b090}
.red{color:#bd5c64}
.w88{width:79px}.w71{width:62px}.w69{width:60px}
.r2 .bl+em{margin:0 0 0 4px}
.vis{margin-left:auto;margin-right:14px;display:flex;align-items:center;gap:7px;color:#e0e0e0}
.vis .i{width:18px;height:17px}
.vis .ck{margin-right:1px}
.ck{width:14px;height:14px}
.oscroll,.pscroll{position:absolute;right:2px;width:5px;border-radius:3px;background:#454545}
.oscroll{top:2px;height:85px}
.guide{position:absolute;left:35px;top:57px;width:1px;height:63px;background:#707070}
.props{height:766px}
.props .hdr{padding-top:0;height:30px}
.s2{margin-left:28px}
.pc{width:25px;margin-left:63px;padding:0}
.pc .c{margin:auto}
.pbody{display:flex;height:736px;position:relative}
.ptabs{width:34px;background:#1a1a1a;flex:none;color:#c0c0c0;overflow:hidden}
.pt{height:35px;display:flex;align-items:center;justify-content:center;padding-right:1.500px}
.pt.a{height:47px;padding-top:9px;border-bottom:1px solid #242424}
.b2{height:45px;padding-top:2px}
.pt.on{background:#303030;height:32px}
.sep{height:44.500px;border-top:1px solid #262626;padding-top:7px}
.pt.bl,.pt.gr,.pt.low{height:34.700px}
.pcol{width:277px;margin-left:10px;display:flex;flex-direction:column;gap:2px;overflow:hidden}
.p0{height:140px;border-radius:0 0 4px 4px}
.prow{height:24px;display:grid;grid-template-columns:96px 147px;column-gap:12px;margin-bottom:1px;align-items:center;white-space:nowrap}
.p0 .prow:first-child{margin-top:-7px}
.prow:has(.chk){grid-template-columns:96px 17px 1fr}
.prow .chk+span{margin-left:-7px;padding-bottom:1px}
.jb{border-radius:4px 4px 0 0;box-shadow:none}
.jt{border-radius:0 0 4px 4px}
.jb.jt{border-radius:0}
.p0 .btn{padding-bottom:0}
.prow.ck1{margin-top:7px}
.muted{opacity:.5}
.fr{margin-top:8px}
.p1{height:157px}
.p1 h3{margin-bottom:11px}
.p1 .s{margin-bottom:.5px}
.sub{display:flex;align-items:center;gap:4px;margin:18.500px 0 0 17px}
.p2{height:335px}
.p2 h3{margin-bottom:11px}
.prow.n{margin:3px 0 0}
.p2 .path+.n{margin-top:6px}
.p2 .ff{margin-top:8px}
.p2 .iq{margin-top:6px}
.hi{color:#fff}
.ff .sel{padding-left:4px;gap:8px}
.seg{display:flex;gap:1px;border-radius:4px;overflow:hidden;height:24px}
.seg div{flex:1;background:#545454;display:flex;align-items:center;justify-content:center;padding-bottom:2px}
.seg .blue{background:#4772b3}
.comp{background:linear-gradient(90deg,#4772b3 20px,#545454 20px)}
.cm{margin-top:19px}
.pscroll{top:141px;height:580px}
.status{height:29px;flex:none;display:flex;align-items:center;padding-left:12px;color:#8c8c8c}
.m{width:16px;height:20px;margin-right:5px}
.f1{width:107px}.f2{width:72px}
.ver{margin-left:auto;margin-right:15px}
```
FILE: charts.js
```js
// Small seeded generator so the drawings are the same on every load.
let seed = 7;
const rnd = () => (seed = (seed * 16807) % 2147483647) / 2147483647;
const put = (id, s) => { document.getElementById(id).innerHTML = s; };
const rect = (x, y, w, h, c, e = '') => `<rect x="${x}" y="${y}" width="${w}" height="${h}" fill="${c}" ${e}/>`;
const label = (x, y, t) => `<text class="rl" x="${x}" y="${y}">${t}</text>`;
const path = (d, c, w = 1, e = '') => `<path d="${d}" stroke="${c}" stroke-width="${w}" fill="none" ${e}/>`;

// Dope sheet
(() => {
  const X = f => 4.3 + f * 0.4803;
  let s = rect(0, 0, 634, 263, '#1d1d1d') + rect(5, 0, 258.500, 263, '#303030');
  for (let f = 0; f <= 1300; f += 100) s += rect(Math.floor(X(f)), 29, 1, 234, f % 200 ? '#292929' : '#1a1a1a');
  for (let f = 600; f <= 1300; f += 100) s += rect(Math.floor(X(f)), 29, 1, 234, f % 200 ? '#181818' : '#101010');
  s += rect(4, 29, 1.500, 234, '#000') + rect(263, 29, 1.500, 234, '#000') + rect(0, 0, 634, 29, '#181818');
  for (let f = 0; f <= 1200; f += 200) s += label(X(f) - .3, 19.5, f);
  const bars = [[5,263],[225,243],[5,54],[225,263],[5,58],[225,263],[5,48],[5,73],[5,67],[5,67],[5,49]];
  const y0 = i => 41.7 + i * 22.45;
  bars.forEach(([a, b], i) => { s += rect(a, y0(i) - 6.500, b - a, 12.500, '#969696'); });
  s += rect(20.700, 20, 2, 232, '#4772b3');
  bars.forEach(([a, b], i) => [a + .5, b + .5].forEach(x => {
    s += `<path d="M${x} ${y0(i) - 6.500}l6 6.500-6 6.500-6-6.500z" fill="#e8e8e8" stroke="#000"/>`;
  }));
  s += rect(6.500, 4, 30, 21, '#4772b3', 'rx="4"') + `<text class="rl" x="21.500" y="19" style="fill:#fff">35</text>`;
  s += rect(11, 251, 612, 11, '#545454', 'rx="5.500"') + '<circle cx="16" cy="256.500" r="4" fill="#303030"/><circle cx="617" cy="256.500" r="4" fill="#303030"/>';
  s += rect(627, 2, 5, 36, '#3d3d3d', 'rx="2.500"');
  put('dopechart', s);
})();

// 3D viewport
(() => {
  let s = rect(0, 0, 748, 294, '#3f3f3f');
  const g = (a, b, c, d, o = 1) => { s += path(`M${a} ${b}L${c} ${d}`, '#4b4b4b', 1, `opacity="${o}"`); };
  [[250,230],[215,195],[176,160],[155,143],[140,130],[131,122],[125,117],[120,113]].forEach(([a, b], i) => g(0, a + 1, 748, b - 28 + i * 2, 1 - i * .09));
  g(0, 337, 748, 245); g(0, 294, 748, 262, .3); g(170, 294, 748, 245);
  [[57,294,211,118],[253,294,245,115],[435,294,285,115],[615,294,325,115],[748,255,365,115],[0,216,165,118],[0,170,120,120],[0,150,80,121],[748,215,420,112],[748,180,480,110],[748,158,520,110]].forEach(a => g(...a, .8));
  s += path('M0 194L368 178L748 164', '#833a42', 1.300) + path('M255 84L353 120', '#475238', 1.200) + path('M353 120L402 138', '#536f33', 1.400) + path('M402 138L443 154L748 263', '#5d8030', 1.700);
  s += path('M113 31L123 211', '#2c2c2c');
  let d = '';
  const cross = (x, y, r) => { const t = rnd() * 2 - 1; d += `M${x - r} ${y + t}L${x + r} ${y - t}M${x + t * .5} ${y - r}L${x - t * .5} ${y + r}`; };
  // dense column of solved points, thick at its middle
  for (let i = 0; i < 330; i++) { const y = 103 + rnd() * 85, q = (rnd() + rnd() + rnd()) / 3; cross(376 + q * 20 - (y > 150 ? 3 : 0), y, 3 + rnd() * 4); }
  for (let i = 0; i < 110; i++) { const y = 110 + rnd() * 45; cross(384 + (rnd() - .5) * 18, y, 5); }
  for (let i = 0; i < 26; i++) cross(374 + rnd() * 36, 165 + rnd() * 24, 7);
  // ground points
  const blob = (n, x, w, y, h, r = 6) => { for (let i = 0; i < n; i++) cross(x + (rnd() + rnd() - 1) * w, y + (rnd() - .5) * h, r * (.6 + rnd() * .7)); };
  blob(24, 440, 24, 178, 24); blob(18, 441, 8, 173, 8, 5); blob(46, 478, 24, 178, 32, 7); blob(30, 505, 25, 182, 26, 7);
  blob(40, 540, 36, 172, 24, 5); blob(85, 565, 38, 174, 40, 7); blob(40, 568, 12, 170, 30, 6); blob(30, 560, 28, 156, 30, 6); blob(28, 530, 45, 187, 16); blob(18, 622, 30, 182, 16); blob(8, 606, 14, 172, 20);
  [[471,104,9],[460,128,9],[460,145,9],[477,122,9],[477,137,9],[477,141,9],[478,148,8],[464,157,9],[535,119,7],[535,124,7],[538,149,9],[565,128,9],[568,138,8],[575,146,8],[584,145,9],[607,108,10],[607,120,9],[607,126,8],[605,137,9],[604,147,8],[603,154,8],[602,162,8],[603,168,8],[418,167,9],[430,187,8],[448,190,8],[500,152,7],[640,180,8],[645,178,6]].forEach(a => cross(...a));
  cross(273, 44, 4); cross(292, 50, 4);
  s += path(d, '#000', 1);
  s += path('M483 160h32l-2 24h-26z', 'none', 0, 'style="fill:#9a9a9a" opacity=".75"') + path('M500 149v18M490 171l8 2M505 176h10M508 170v11', '#000', 1);
  s += '<path d="M639 80L622 108L659 109z" fill="#000"/>' + path('M615 110L670 113L671 160L617 150zM615 110L700 126L671 160M617 150L700 126L670 113M699 126l5 3h40l4 1M688 134l20 5h38', '#111', 1.100);
  s += '<circle cx="499.500" cy="174" r="12.500" fill="none" stroke="#fff" stroke-width="1.600"/><circle cx="499.500" cy="174" r="12.500" fill="none" stroke="#e11" stroke-width="1.600" stroke-dasharray="5 5"/><circle cx="499" cy="174" r="2.200" fill="#f90"/>';
  put('scene3d', s);
})();

// Clip editor tracks: marker x, y, trail end x, y in clip units
(() => {
  const U = (x, y) => [Math.round((x - 857.5) / 2.45), Math.round((y - 126) / 3)];
  const left = [[1274,158,1320,156],[1070,207,1110,203],[1206,219,1248,218],[1352,225,1398,224],[1134,266,1178,263],[1200,350,1245,348],[1520,336,1575,334],[1356,411,1400,410],[1014,442,1056,439],[1145,473,1195,472],[1286,461,1332,461],[1428,484,1476,483],[1075,519,1128,517],[1519,522,1575,520],[1281,590,1346,591],[919,629,985,630],[999,656,1090,654],[1080,648,1155,650],[1363,669,1440,670],[1495,629,1568,631],[959,765,1052,770],[1100,791,1202,796],[1258,818,1368,824],[1335,794,1440,799],[1440,756,1530,755],[1537,753,1640,756],[901,859,1010,866],[1011,917,1135,928],[1101,908,1223,917],[1477,857,1600,862],[1447,1028,1600,1036],[1526,1050,1700,1058],[1350,1126,1518,1136],[1030,1193,1205,1208],[1275,1208,1457,1222],[1521,1184,1700,1196],[1462,1266,1660,1279]];
  const right = [[230,173,280,172],[157,212,207,211],[18,271,68,268],[282,258,335,256],[409,155,463,154],[486,147,540,147],[568,150,620,149],[716,130,770,129],[676,209,732,209],[793,185,846,186],[893,163,946,164],[978,133,1033,134],[1072,176,1128,179],[614,271,668,271],[850,261,904,262],[940,243,996,244],[760,286,815,287],[682,322,736,322],[897,338,952,340],[753,407,806,406],[852,445,908,446],[941,416,996,417],[204,507,258,506],[595,500,648,500],[807,529,864,530],[149,592,216,592],[363,614,434,615],[442,633,518,634],[646,611,718,610],[192,732,286,736],[414,748,510,750],[509,740,604,741],[610,716,700,716],[693,716,785,717],[575,807,690,807],[653,805,765,807],[899,799,1006,802],[264,859,383,863],[56,874,190,880],[181,890,308,895],[784,863,904,867],[392,907,520,912],[31,973,172,979],[133,965,265,966],[258,959,396,964],[338,985,484,990],[611,976,756,982],[855,967,996,970],[431,1033,585,1039],[151,1061,300,1066],[296,1068,456,1075],[237,1127,410,1135],[727,1108,898,1114],[473,1185,658,1192],[678,1178,830,1184],[889,1168,1070,1174],[31,1210,217,1219],[784,1295,870,1297],[872,1286,1075,1291]];
  const lostL = [[1145,142],[1408,149],[1112,217],[908,253],[928,300],[1325,325],[1253,343],[918,493],[1061,475],[1185,475],[1275,487],[1427,472],[1434,528],[1556,475],[1103,529],[878,558],[1071,627],[1373,629],[1323,640],[1439,685],[1265,700],[912,750],[1184,962],[1334,996],[1558,964],[1041,1097],[1108,1124],[1547,1091]];
  const lostR = [[30,121],[266,151],[592,178],[371,310],[109,337],[453,357],[689,362],[271,433],[851,400],[979,403],[77,517],[609,493],[384,610],[36,698],[232,694],[503,765],[273,793],[588,820],[755,780],[763,805],[72,844],[586,949],[526,973],[285,960],[249,1060],[186,1073],[424,1146]];
  const shift = a => a.map(v => v.map((n, i) => i % 2 ? n : n + 1568));
  const tracks = left.concat(shift(right)), lost = lostL.concat(shift(lostR));
  let s = rect(0, 0, 886, 390, '#2b2b2b');
  s += rect(0, 79, 886, 1, '#191919') + rect(0, 186, 886, 1, '#232323') + rect(0, 293, 886, 1, '#232323');
  [87, 277, 467, 658, 848].forEach((x, i) => { s += rect(x, 0, 1, 390, i === 1 ? '#191919' : '#232323'); });
  // a trail is laid down in short steps, with dark keyframe dots along its edges
  const trail = (x, y, a, b) => {
    const n = Math.max(3, Math.round((a - x) / 7)), long = y > 255;
    for (let i = 0; i < n; i++) {
      const u = Math.round(x + 5 + (a - x - 5) * i / n), w = Math.ceil((a - x - 5) / n) + 1;
      const k = i / n, v = Math.round(y - 1 + (b - y + 1) * k * (long ? k * .5 + .5 : 1));
      s += rect(u, v - 1, w, long ? 3 : 3 + i % 2, '#00f');
      if (long && k < .8) s += rect(u + 2, v - 1, 1, 1, '#000') + rect(u + 5, v + 1, 1, 1, '#000');
    }
    s += rect(a - 2, b - 1, 3, 3, '#00f');
  };
  trail(...U(845, 795), ...U(928, 807));
  tracks.forEach(t => trail(...U(t[0], t[1]), ...U(t[2], t[3])));
  tracks.forEach(t => {
    const [x, y] = U(t[0], t[1]);
    if (y < 155) s += rect(x + 7, y - 3, 4, 2, '#f00');
    else if (y < 195) s += rect(x - 7, y - 1, 2, 4, '#f00');
    else if (y < 275) { const r = Math.round((y - 165) / 15); s += rect(x - 6 - r, y - 1, r + 1, 4, '#f00') + rect(x - 5 - Math.round(r * .6), y - 4, Math.round(r * .6), 4, '#f00'); }
    else { const r = y > 310 ? 3 : 0; s += rect(x - 13 - r, y - 1, 9, 3, '#f00') + rect(x - 12 - r, y - 4, 4, 4, '#f00') + rect(x - 10 - r, y - 5, 5 + r, 3, '#f00') + rect(x - 7, y - 4, 3, 4, '#f00') + (r ? rect(x - 13 - r, y + 1, 8, 2, '#f00') : ''); }
  });
  const box = (x, y, c) => rect(x - 5.500, y - 4.500, 11, 9, 'none', 'stroke="#000"') + rect(x - 4.500, y - 5.500, 9, 11, 'none', 'stroke="#000"') + rect(x - 3.500, y - 3.500, 7, 7, 'none', 'stroke="#000"') + rect(x - 4.500, y - 4.500, 9, 9, 'none', `stroke="${c}"`);
  lost.forEach(t => { s += box(...U(t[0], t[1]), '#800000'); });
  tracks.forEach(t => { const [x, y] = U(t[0], t[1]); s += rect(x - 4, y - 4, 8, 8, '#111') + box(x, y, '#8c8c00') + rect(x - 3, y - 2, 1, 4, '#e00') + rect(x + 2, y - 2, 1, 4, '#00c') + rect(x - 1, y - 3, 2, 1, '#700') + rect(x - 1, y - 1, 2, 2, '#8c8c00'); });
  [[1582,586,1650,588,'#ff0'],[1851,604,1918,604,'#ff0'],[1635,764,1738,768,'#fff']].forEach(t => {
    const [x, y] = U(t[0], t[1]), [a, b] = U(t[2], t[3]);
    s += path(`M${x} ${y - 1}L${a} ${b}`, '#000', 6) + path(`M${x} ${y - 1}L${a} ${b}`, '#00f', 3.500);
    s += rect(x - 6, y - 6, 12, 12, '#2b2b2b', 'stroke="#000" stroke-width="2"');
    s += path(`M${x - 4.500} ${y - 4.500}h9v9h-9zM${x} ${y + .5}h7`, t[4], 1) + [[-6,-6],[3,-6],[-6,3],[3,3],[7,-1]].map(p => rect(x + p[0], y + p[1], 3, 3, t[4])).join('') + rect(x - 8, y - 1, 2, 3, '#f00');
  });
  s += rect(0, 381, 886, 9, '#54549e', 'opacity=".6"') + rect(0, 386, 157, 4, '#85853f') + rect(0, 379, 2, 11, '#af0') + rect(306, 379, 2, 11, '#af0') + rect(55, 378, 2, 12, '#4772b3') + rect(885, 232, 1, 3, '#f00');
  put('clipcanvas', s);
})();

// Graph editor: [x, top, bottom] envelope of the velocity curves
(() => {
  const X = f => 271.9 + f * 1.97, base = 816.5;
  let s = rect(0, 0, 1583, 141, '#1d1d1d') + rect(272, 29, 1064, 112, '#303030');
  for (let f = -125; f <= 650; f += 25) { const inn = f > 0 && f < 540; s += rect(Math.floor(X(f)), 29, 1, 112, f % 50 ? (inn ? '#292929' : '#191919') : (inn ? '#1a1a1a' : '#101010')); }
  s += rect(0, 70, 1583, 1, '#111') + rect(0, 126, 1583, 1, '#222') + rect(272, 29, 2, 112, '#000') + rect(1335, 29, 1, 112, '#000') + rect(0, 0, 1583, 28, '#181818');
  for (let f = -100; f <= 650; f += 50) s += label(X(f) - .5, 19, f);
  s += label(14, 75.500, 0);
  const red = [[274,884,889],[283,887,890],[290,879,885],[300,886,893],[307,895,901],[318,888,893],[325,880,887],[340,868,887],[350,856,882],[358,851,878],[365,857,880],[375,862,887],[390,869,895],[405,867,893],[415,867,890],[422,875,894],[430,886,910],[440,888,916],[450,886,914],[458,883,909],[467,882,902],[475,882,902],[485,886,908],[497,888,913],[505,880,902],[512,874,893],[520,872,890],[532,873,884],[543,874,883],[550,878,884],[558,888,896],[565,900,912],[570,908,918],[576,900,911],[585,884,896],[595,880,890],[605,880,886],[615,885,896],[625,892,902],[635,890,898],[645,887,894],[660,892,899],[669,890,899],[670,877,903],[680,877,896],[690,886,895],[715,884,898],[725,882,900],[740,879,901],[770,878,899],[775,884,905],[785,888,915],[793,888,918],[805,885,910],[820,886,902],[830,886,901],[840,886,895],[850,889,895],[858,875,882],[865,855,864],[870,847,854],[876,845,850],[882,850,858],[890,868,874],[900,880,885],[912,893,898],[916,893,900],[922,875,885],[930,845,862],[938,843,860],[945,848,866],[950,866,878],[958,885,898],[966,893,912],[972,892,915],[978,885,905],[985,870,878],[995,850,858],[1002,844,850],[1008,844,848],[1015,855,862],[1025,863,868],[1035,859,865],[1045,856,863],[1055,862,868],[1060,875,880],[1068,890,896],[1075,883,890],[1085,862,872],[1097,850,862],[1105,856,870],[1115,862,873],[1130,865,875],[1140,874,884],[1148,888,898],[1160,893,904],[1175,892,906],[1182,892,906],[1183,878,908],[1195,876,904],[1205,886,903],[1240,886,906],[1247,880,901],[1252,875,890],[1260,877,884],[1272,880,886],[1283,887,890],[1300,886,890],[1336,886,888]];
  // resample the envelope every 3 px so that each strand gets a fine jitter
  const fine = [];
  for (let i = 0; i < red.length - 1; i++) {
    const [x, t, b] = red[i], [x2, t2, b2] = red[i + 1], n = Math.max(1, Math.round((x2 - x) / 3));
    for (let k = 0; k < n; k++) { const u = k / n, j = (rnd() - .5) * 1.6; fine.push([x + (x2 - x) * u, t + (t2 - t) * u + j, b + (b2 - b) * u + j]); }
  }
  const strand = (q, j) => fine.map(([x, t, b], i) => `${i ? 'L' : 'M'}${(x - 1).toFixed(1)} ${(t + (b - t) * q + (rnd() - .5) * j - base).toFixed(1)}`).join('');
  for (let i = 0; i <= 24; i++) { const thin = i < 7; s += path(strand(i / 24, 1), thin ? '#b41414' : '#f00', thin ? 1 : 1.600); }
  for (let i = 0; i < 4; i++) s += path(fine.filter(p => p[0] > 335 && p[0] < 422).map(([x, t, b], k) => `${k ? 'L' : 'M'}${x - 1} ${t + (b - t) * (.2 + i * .16) - base}`).join(''), '#f00', 3);
  // loose outlying curves: points, colour, number of parallel strands
  const lines = [
    [[[506,882],[514,872],[528,867],[543,861],[550,868]], '#a01818', 1], [[[508,885],[518,877],[535,872],[546,872]], '#a01818', 1],
    [[[671,880],[672,903],[688,896],[705,898],[730,903],[752,901],[774,905]], '#a01818', 3],
    [[[1182,904],[1183,912],[1196,906],[1215,906],[1240,908],[1247,899]], '#a01818', 3],
    [[[700,884],[708,878],[722,875],[728,882]], '#0a0', 2], [[[1182,872],[1200,869],[1215,876],[1235,873],[1247,884]], '#0a0', 4]];
  lines.forEach(([l, c, n]) => { for (let k = 0; k < n; k++) s += path(l.map(([x, y], i) => `${i ? 'L' : 'M'}${x} ${(y - base + k * 2.5 + rnd() * 2).toFixed(1)}`).join(''), c, 1); });
  const green = [[273,886],[280,884],[290,888],[300,886],[310,883],[316,893],[325,890],[340,885],[350,889],[365,890],[378,890],[388,885],[400,888],[415,885],[430,896],[440,887],[450,881],[458,891],[467,892],[480,882],[490,889],[505,888],[517,883],[525,894],[535,886],[545,884],[556,896],[565,887],[578,883],[588,886],[593,891],[615,886],[623,890],[635,891],[645,887],[655,890],[665,891],[675,885],[700,885],[715,884],[730,886],[745,889],[765,888],[770,882],[777,890],[790,890],[797,884],[815,887],[833,887],[850,887],[868,889],[885,886],[912,888],[935,889],[950,885],[972,888],[985,885],[1000,889],[1016,883],[1030,893],[1043,886],[1060,885],[1076,890],[1090,887],[1104,893],[1114,882],[1126,892],[1140,887],[1165,889],[1182,887],[1192,882],[1215,883],[1245,882],[1256,888],[1268,885],[1281,891],[1303,886],[1310,890],[1336,888]];
  let body = '', dark = '';
  for (let i = 0; i < green.length - 1; i++) {
    const [x, y] = green[i], [x2, y2] = green[i + 1];
    for (let u = x; u < x2; u += 1) {
      const wide = (u > 1182 && u < 1250) ? 3.5 : (u > 690 && u < 800) || (u > 425 && u < 470) ? 2.6 : u > 1283 ? 1 : 1.8;
      const v = y + (y2 - y) * (u - x) / (x2 - x) - base + (rnd() - .5) * 1.5, h = wide + rnd() * 1.8;
      body += `M${u - .5} ${(v - h).toFixed(1)}V${(v + h).toFixed(1)}`;
      if (u < 385 || (u > 425 && u < 462)) dark += `M${u - .5} ${(v - h - 2).toFixed(1)}V${(v + h + 1.5).toFixed(1)}`;
    }
  }
  s += path(dark, '#000', 1) + path(body, '#0f0', 1);
  s += path(fine.filter(p => p[0] > 286 && p[0] < 312).map(([x, t, b], k) => `${k ? 'L' : 'M'}${x - 1} ${(t + b) / 2 - base}`).join(''), '#f00', 4);
  s += rect(272, 69, 1063, 1, '#00f') + rect(340, 20, 2, 121, '#4772b3');
  s += rect(326, 3, 30, 21, '#4772b3', 'rx="4"') + '<text class="rl" x="341" y="18.500" style="fill:#fff">35</text>';
  s += '<g shape-rendering="auto">' + rect(10, 128, 1563, 11, '#545454', 'rx="5.500"') + '<circle cx="15.500" cy="133.500" r="4" fill="#303030"/><circle cx="1567" cy="133.500" r="4" fill="#303030"/>';
  s += rect(1571, 30, 11, 96, '#545454', 'rx="5.500"') + '<circle cx="1576.500" cy="35.500" r="4" fill="#303030"/><circle cx="1576.500" cy="120.500" r="4" fill="#303030"/></g>';
  put('graphchart', s);
})();
```
